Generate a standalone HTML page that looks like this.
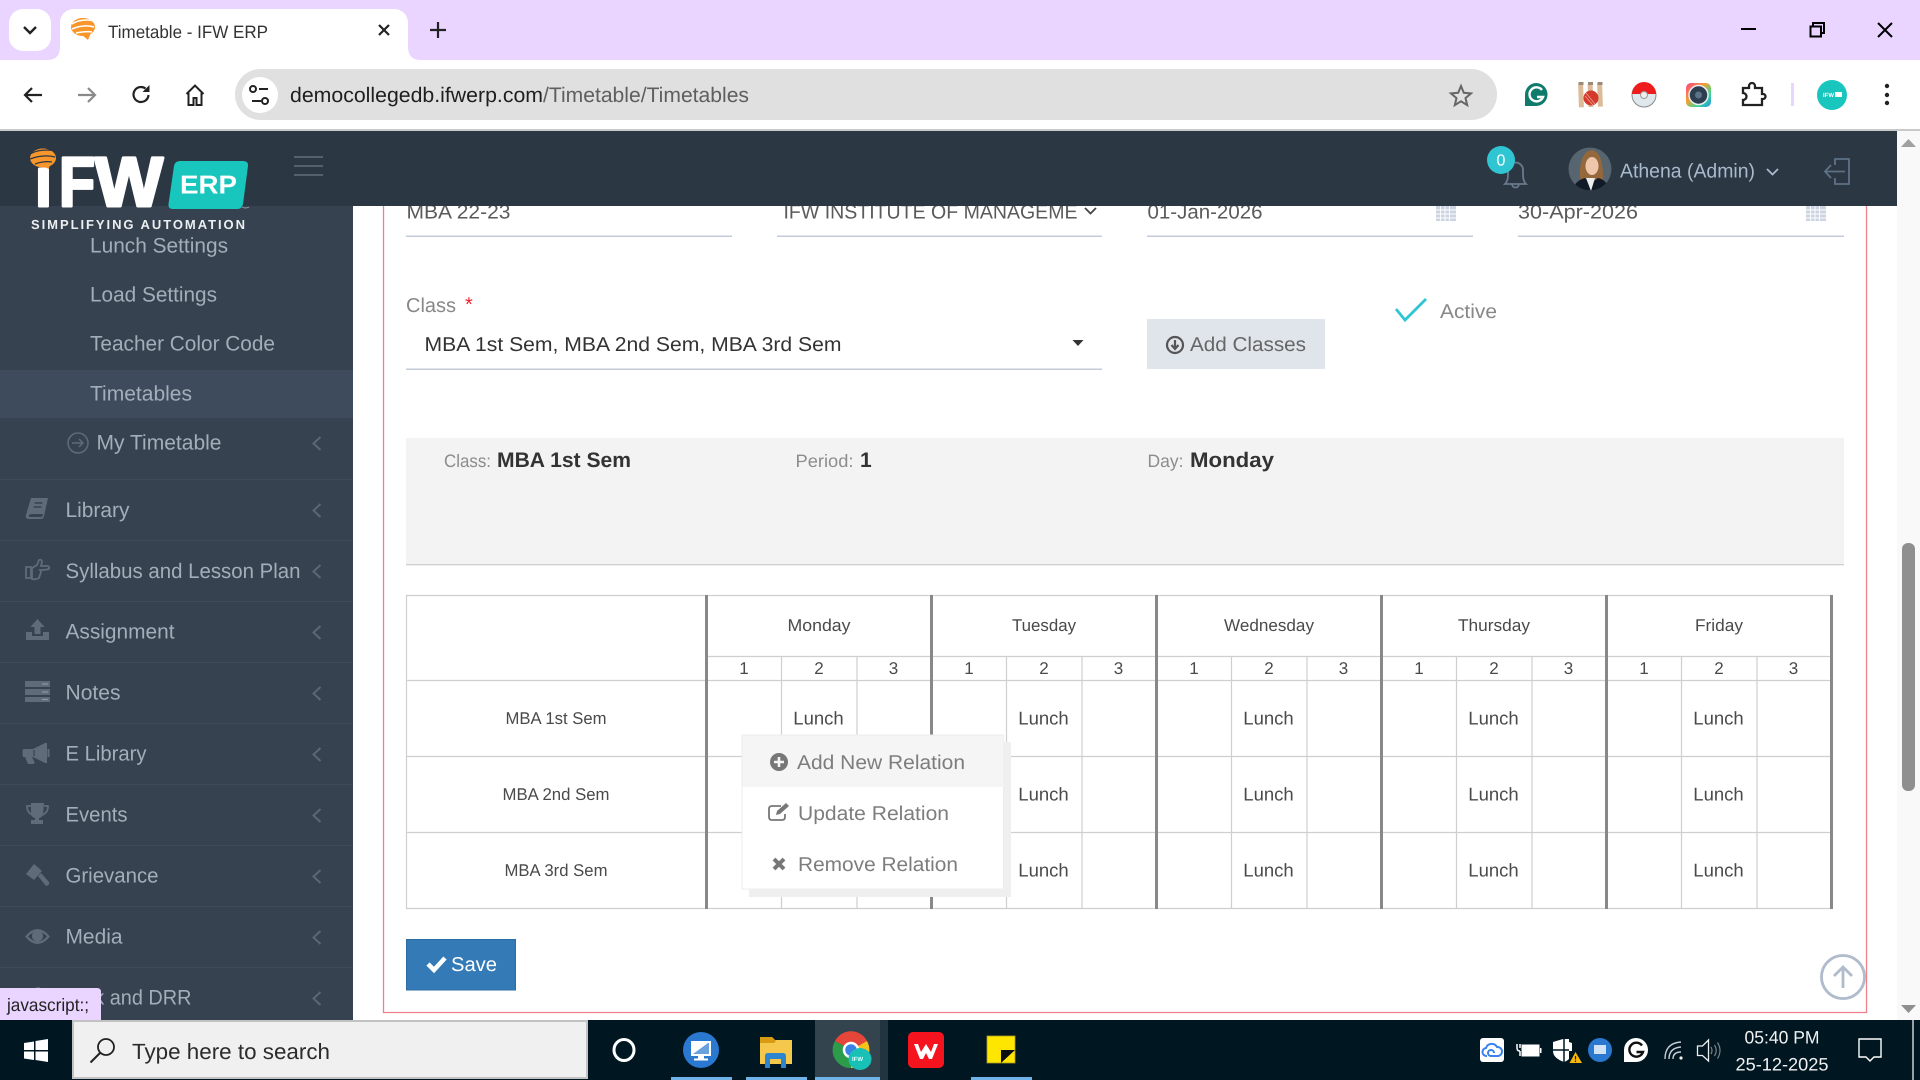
<!DOCTYPE html>
<html><head><meta charset="utf-8"><title>Timetable - IFW ERP</title>
<style>
html,body{margin:0;padding:0;width:1920px;height:1080px;overflow:hidden;background:#fff}
svg{display:block;position:absolute;left:0;top:0}
text{font-family:"Liberation Sans",Arial,sans-serif;text-rendering:geometricPrecision}
.m{fill:#a4aeba;font-size:21px}
.g{fill:#5f6b79}
.ch{fill:none;stroke:#5b6776;stroke-width:2}
.v{fill:#5a5a5a;font-size:20px}
.l{fill:#4a4a4a;font-size:17px;text-anchor:middle}
.p{fill:#4a4a4a;font-size:17px;text-anchor:middle}
.u{fill:#4a4a4a;font-size:18.5px;text-anchor:middle}
.d{fill:#7d7d7d;font-size:20px}
.lb{fill:#8c8c8c;font-size:18px}
.b{fill:#333;font-size:21px;font-weight:bold}
.logo{font-size:70px;font-weight:bold;fill:#fff;stroke:#fff;stroke-width:3;stroke-linejoin:round}
</style></head><body>
<svg width="1920" height="1080" viewBox="0 0 1920 1080" xmlns="http://www.w3.org/2000/svg">
<!-- browser chrome -->
<rect width="1920" height="60" fill="#e9d5ff"/>
<rect x="9" y="9" width="42" height="42" rx="14" fill="#fff"/>
<path d="M24 27l6 6 6-6" fill="none" stroke="#222" stroke-width="2.4"/>
<path d="M46 60c10 0 14-4 14-14V23c0-8 6-14 14-14h320c8 0 14 6 14 14v23c0 10 4 14 14 14z" fill="#fff"/>
<ellipse cx="83" cy="27" rx="12" ry="9" fill="#f8962c"/>
<path d="M72 24c6-4 15-5 22-3M72 29c7-3 15-4 22-2M76 33c5-1 11-2 16-1" stroke="#fff" stroke-width="1.500" fill="none"/>
<path d="M82 35l6 5 3-7z" fill="#f8962c"/>
<text x="108" y="38" font-size="18" fill="#333" textLength="160" lengthAdjust="spacingAndGlyphs">Timetable - IFW ERP</text>
<path d="M379 25l10 10M389 25l-10 10" stroke="#222" stroke-width="2.2"/>
<path d="M430 30h16M438 22v16" stroke="#222" stroke-width="2.2"/>
<path d="M1741 29h15" stroke="#000" stroke-width="2"/>
<path d="M1813 26v-3h11v10h-3M1810.500 26.500h10.500v10h-10.500z" fill="none" stroke="#000" stroke-width="2"/>
<path d="M1878 23l14 14M1892 23l-14 14" stroke="#000" stroke-width="2"/>
<path d="M0 129V74q0-14 14-14H1906q14 0 14 14V129z" fill="#fff"/>
<rect y="129" width="1920" height="2" fill="#c9c9c9"/>
<path d="M42 95H25M32 88l-7 7 7 7" fill="none" stroke="#222" stroke-width="2.2"/>
<path d="M95 95H78M88 88l7 7-7 7" fill="none" stroke="#8a8a8a" stroke-width="2.2"/>
<path d="M148.500 95a7.500 7.500 0 1 1-3-6.500" fill="none" stroke="#222" stroke-width="2.2"/>
<path d="M149.500 85v7h-7z" fill="#222"/>
<path d="M186.500 94l8.500-8.500L203.500 94M188.500 93v12h5v-7h3v7h5V93" fill="none" stroke="#222" stroke-width="2"/>
<rect x="235" y="69" width="1262" height="51" rx="25.500" fill="#e0e0e0"/>
<circle cx="260" cy="95" r="18" fill="#fff"/>
<circle cx="253" cy="89" r="3" fill="none" stroke="#222" stroke-width="2"/>
<path d="M259 89h9M252 101h9" stroke="#222" stroke-width="2"/>
<circle cx="265" cy="101" r="3" fill="none" stroke="#222" stroke-width="2"/>
<text x="290" y="102" font-size="21" fill="#1f1f1f" textLength="253" lengthAdjust="spacingAndGlyphs">democollegedb.ifwerp.com</text>
<text x="543" y="102" font-size="21" fill="#5f5f5f" textLength="206" lengthAdjust="spacingAndGlyphs">/Timetable/Timetables</text>
<path d="M1461 86l2.800 6.800 7.200.6-5.500 4.700 1.700 7-6.200-3.800-6.200 3.800 1.700-7-5.500-4.700 7.200-.6z" fill="none" stroke="#666" stroke-width="2"/>
<!-- extensions -->
<path d="M1536 83a11.500 11.500 0 1 1 0 23h-11v-11.500a11.500 11.500 0 0 1 11-11.500z" fill="#0f7b6c"/>
<path d="M1542 90a7 7 0 1 0 1 7h-6" fill="none" stroke="#fff" stroke-width="2.400"/>
<g transform="rotate(-2 1590 95)"><rect x="1578.500" y="84" width="5" height="23" fill="#dcbc98"/><rect x="1588" y="84" width="5" height="23" fill="#dcbc98"/><rect x="1597.500" y="84" width="5" height="23" fill="#dcbc98"/></g>
<path d="M1578.500 82h5v3h-5zM1588 82h5v3h-5zM1597.500 82h5v3h-5z" fill="#9c8a78"/>
<circle cx="1591" cy="98" r="7.500" fill="#d33a2c"/><path d="M1586 93l9 11M1585 96l8 9" stroke="#f3a8a0" stroke-width=".7"/>
<circle cx="1644" cy="95" r="12" fill="#dfe8ec" stroke="#8a8a8a"/>
<path d="M1632 94a12 12 0 0 1 24 0z" fill="#ee1c1c"/>
<circle cx="1644" cy="95" r="3.500" fill="#eee" stroke="#999"/>
<defs><linearGradient id="ig" x1="0" y1="0" x2="1" y2="1"><stop offset="0" stop-color="#ff3d8b"/><stop offset=".4" stop-color="#f2a030"/><stop offset=".7" stop-color="#3dd890"/><stop offset="1" stop-color="#2090f0"/></linearGradient></defs>
<rect x="1686" y="83" width="25" height="24" rx="5" fill="url(#ig)"/>
<circle cx="1698.500" cy="95" r="9.500" fill="#2d3e50" stroke="#e8edf2" stroke-width="1.500"/>
<circle cx="1698.500" cy="95" r="3.500" fill="#5c7488"/>
<path d="M1743 88h6v-2a3 3 0 0 1 6 0v2h7v6h1a2.500 2.500 0 0 1 0 5h-1v6h-19v-5a3 3 0 0 0 0-7z" fill="none" stroke="#222" stroke-width="2.300"/>
<rect x="1791" y="83" width="3" height="23" fill="#e9d5ff"/>
<circle cx="1832" cy="95" r="15" fill="#19c6bd"/>
<text x="1823" y="97" font-size="6" font-weight="bold" fill="#fff">IFW</text><rect x="1835" y="92" width="7" height="5" fill="#fff"/>
<circle cx="1887" cy="86" r="2.200" fill="#222"/><circle cx="1887" cy="95" r="2.200" fill="#222"/><circle cx="1887" cy="103" r="2.200" fill="#222"/>

<!-- main -->
<rect x="1897" y="131" width="23" height="889" fill="#f9f9f9"/>
<path d="M1901 147l7.500-8 7.500 8z" fill="#a0a0a0"/>
<path d="M1901 1005l7.500 8 7.500-8z" fill="#8f8f8f"/>
<rect x="1902" y="543" width="13" height="248" rx="6" fill="#8f8f8f"/>
<path d="M383.500 206V1012.500H1866.500V206" fill="none" stroke="#ef7f88" stroke-width="1.300"/>

<text x="406.500" y="218.500" class="v" textLength="104" lengthAdjust="spacingAndGlyphs">MBA 22-23</text>
<text x="783.500" y="218.500" class="v" textLength="294" lengthAdjust="spacingAndGlyphs">IFW INSTITUTE OF MANAGEME</text>
<path d="M1085 208l5.500 5.500 5.500-5.500" fill="none" stroke="#444" stroke-width="1.800"/>
<text x="1147.500" y="218.500" class="v" textLength="115" lengthAdjust="spacingAndGlyphs">01-Jan-2026</text>
<text x="1518" y="218.500" class="v" textLength="120" lengthAdjust="spacingAndGlyphs">30-Apr-2026</text>
<g id="cal"><rect x="1436" y="206" width="20" height="15" fill="#ccd4e2"/>
<path d="M1440.500 206v15M1445 206v15M1449.500 206v15M1436 210h20M1436 214h20M1436 218h20" stroke="#fff" stroke-width=".9"/></g>
<use href="#cal" x="370"/>
<g fill="#c3cbd9"><rect x="406" y="235.500" width="326" height="1.500"/><rect x="777" y="235.500" width="325" height="1.500"/><rect x="1147" y="235.500" width="326" height="1.500"/><rect x="1518" y="235.500" width="326" height="1.500"/><rect x="406" y="368.500" width="696" height="1.500"/></g>

<text x="406" y="312" font-size="20" fill="#888" textLength="50" lengthAdjust="spacingAndGlyphs">Class</text>
<text x="465" y="311" font-size="20" fill="#f0202c">*</text>
<text x="424.500" y="351" font-size="20" fill="#333" textLength="417" lengthAdjust="spacingAndGlyphs">MBA 1st Sem, MBA 2nd Sem, MBA 3rd Sem</text>
<path d="M1072.500 340h11l-5.500 6z" fill="#333"/>
<rect x="1147" y="319" width="178" height="50" fill="#e0e5ec"/>
<circle cx="1175" cy="345" r="8" fill="none" stroke="#555" stroke-width="2.200"/>
<path d="M1175 340v8M1171.500 345l3.500 4 3.500-4" fill="none" stroke="#555" stroke-width="2.200"/>
<text x="1190" y="351" font-size="20" fill="#666" textLength="116" lengthAdjust="spacingAndGlyphs">Add Classes</text>
<path d="M1396 309l9 11 21-21" fill="none" stroke="#2fc5d3" stroke-width="2.800"/>
<text x="1440" y="318" font-size="20" fill="#888" textLength="57" lengthAdjust="spacingAndGlyphs">Active</text>

<rect x="406" y="438" width="1438" height="126" fill="#f3f3f3"/>
<rect x="406" y="564" width="1438" height="1.300" fill="#cfcfcf"/>
<text x="444" y="467" class="lb" textLength="47" lengthAdjust="spacingAndGlyphs">Class:</text>
<text x="497" y="467" class="b" textLength="134" lengthAdjust="spacingAndGlyphs">MBA 1st Sem</text>
<text x="795.500" y="467" class="lb" textLength="58" lengthAdjust="spacingAndGlyphs">Period:</text>
<text x="860" y="467" class="b">1</text>
<text x="1147.500" y="467" class="lb" textLength="36" lengthAdjust="spacingAndGlyphs">Day:</text>
<text x="1190" y="467" class="b" textLength="84" lengthAdjust="spacingAndGlyphs">Monday</text>

<!-- table -->
<g stroke="#cfcfcf" stroke-width="1.200" fill="none">
<path d="M406.500 595.500H1832M406.500 680.500H1832M706 656.500H1832M406.500 756.500H1832M406.500 832.500H1832M406.500 908.500H1832M406.500 595V909"/>
<path d="M781.500 656V908M857 656V908M1006.500 656V908M1082 656V908M1231.500 656V908M1307 656V908M1456.500 656V908M1532 656V908M1681.500 656V908M1757 656V908"/>
</g>
<g fill="#888"><rect x="705" y="595" width="3" height="314"/><rect x="930" y="595" width="3" height="314"/><rect x="1155" y="595" width="3" height="314"/><rect x="1380" y="595" width="3" height="314"/><rect x="1605" y="595" width="3" height="314"/><rect x="1830" y="595" width="3" height="314"/></g>
<text x="819" y="631" class="p" textLength="63" lengthAdjust="spacingAndGlyphs">Monday</text>
<text x="1044" y="631" class="p" textLength="64" lengthAdjust="spacingAndGlyphs">Tuesday</text>
<text x="1269" y="631" class="p" textLength="90" lengthAdjust="spacingAndGlyphs">Wednesday</text>
<text x="1494" y="631" class="p" textLength="72" lengthAdjust="spacingAndGlyphs">Thursday</text>
<text x="1719" y="631" class="p" textLength="48" lengthAdjust="spacingAndGlyphs">Friday</text>
<text x="744" y="674" class="p">1</text><text x="819" y="674" class="p">2</text><text x="893.500" y="674" class="p">3</text>
<text x="969" y="674" class="p">1</text><text x="1044" y="674" class="p">2</text><text x="1118.500" y="674" class="p">3</text>
<text x="1194" y="674" class="p">1</text><text x="1269" y="674" class="p">2</text><text x="1343.500" y="674" class="p">3</text>
<text x="1419" y="674" class="p">1</text><text x="1494" y="674" class="p">2</text><text x="1568.500" y="674" class="p">3</text>
<text x="1644" y="674" class="p">1</text><text x="1719" y="674" class="p">2</text><text x="1793.500" y="674" class="p">3</text>
<text x="556" y="724" class="l" textLength="101" lengthAdjust="spacingAndGlyphs">MBA 1st Sem</text>
<text x="556" y="800" class="l" textLength="107" lengthAdjust="spacingAndGlyphs">MBA 2nd Sem</text>
<text x="556" y="876" class="l" textLength="103" lengthAdjust="spacingAndGlyphs">MBA 3rd Sem</text>
<text x="818.500" y="724.500" class="u">Lunch</text>
<text x="1043.500" y="724.500" class="u">Lunch</text><text x="1268.500" y="724.500" class="u">Lunch</text><text x="1493.500" y="724.500" class="u">Lunch</text><text x="1718.500" y="724.500" class="u">Lunch</text>
<text x="1043.500" y="800.500" class="u">Lunch</text><text x="1268.500" y="800.500" class="u">Lunch</text><text x="1493.500" y="800.500" class="u">Lunch</text><text x="1718.500" y="800.500" class="u">Lunch</text>
<text x="1043.500" y="876.500" class="u">Lunch</text><text x="1268.500" y="876.500" class="u">Lunch</text><text x="1493.500" y="876.500" class="u">Lunch</text><text x="1718.500" y="876.500" class="u">Lunch</text>

<!-- context menu -->
<rect x="749" y="742" width="262" height="155" fill="#efefef"/>
<rect x="742" y="735" width="261.500" height="154" fill="#fff" stroke="#ececec"/>
<rect x="742.500" y="735.500" width="261" height="51.500" fill="#f5f5f5"/>
<circle cx="779" cy="762" r="9" fill="#777"/><path d="M779 757v10M774 762h10" stroke="#f5f5f5" stroke-width="2.600"/>
<text x="797" y="769" class="d" textLength="168" lengthAdjust="spacingAndGlyphs">Add New Relation</text>
<path d="M781 806h-9q-3 0-3 3v8q0 3 3 3h10q3 0 3-3v-3" fill="none" stroke="#777" stroke-width="1.800"/>
<path d="M776 815l1-4 9-8 3 3-9 8z" fill="#777"/>
<text x="798" y="820" class="d" textLength="151" lengthAdjust="spacingAndGlyphs">Update Relation</text>
<path d="M774 859l10 10M784 859l-10 10" stroke="#777" stroke-width="4"/>
<text x="798" y="871" class="d" textLength="160" lengthAdjust="spacingAndGlyphs">Remove Relation</text>

<!-- save -->
<rect x="406.500" y="939.500" width="109" height="50.500" fill="#337ab7" stroke="#2e6da4"/>
<path d="M428 964l6 6 11-12" fill="none" stroke="#fff" stroke-width="4.500"/>
<text x="451" y="971" font-size="20" fill="#fff" textLength="46" lengthAdjust="spacingAndGlyphs">Save</text>
<circle cx="1843" cy="977" r="21.500" fill="#fff" fill-opacity=".6" stroke="#b0bccc" stroke-width="2.800"/>
<path d="M1843 988v-21M1834 976l9-9 9 9" fill="none" stroke="#b0bccc" stroke-width="2.800"/>

<!-- sidebar -->
<rect y="206" width="353" height="814" fill="#36424f"/>
<text x="90" y="252.500" class="m" textLength="138" lengthAdjust="spacingAndGlyphs">Lunch Settings</text>
<text x="90" y="301.500" class="m" textLength="127" lengthAdjust="spacingAndGlyphs">Load Settings</text>
<text x="90" y="350.500" class="m" textLength="185" lengthAdjust="spacingAndGlyphs">Teacher Color Code</text>
<rect y="370" width="353" height="48" fill="#3e4b5c"/>
<text x="90" y="400.500" class="m" textLength="102" lengthAdjust="spacingAndGlyphs">Timetables</text>
<circle cx="78" cy="443" r="10" fill="none" stroke="#5f6b79" stroke-width="1.500"/>
<path d="M72 443h11M79 439l4 4-4 4" fill="none" stroke="#5f6b79" stroke-width="1.500"/>
<text x="96.500" y="449.500" class="m" textLength="125" lengthAdjust="spacingAndGlyphs">My Timetable</text>
<g stroke="#3f4b5a" stroke-width="1"><path d="M0 479.500H353M0 540.500H353M0 601.500H353M0 662.500H353M0 723.500H353M0 784.500H353M0 845.500H353M0 906.500H353M0 967.500H353"/></g>
<text x="65.500" y="517" class="m" textLength="64" lengthAdjust="spacingAndGlyphs">Library</text>
<text x="65.500" y="578" class="m" textLength="235" lengthAdjust="spacingAndGlyphs">Syllabus and Lesson Plan</text>
<text x="65.500" y="638.500" class="m" textLength="109" lengthAdjust="spacingAndGlyphs">Assignment</text>
<text x="65.500" y="699.500" class="m" textLength="55" lengthAdjust="spacingAndGlyphs">Notes</text>
<text x="65.500" y="760.500" class="m" textLength="81" lengthAdjust="spacingAndGlyphs">E Library</text>
<text x="65.500" y="821.500" class="m" textLength="62" lengthAdjust="spacingAndGlyphs">Events</text>
<text x="65.500" y="882.500" class="m" textLength="93" lengthAdjust="spacingAndGlyphs">Grievance</text>
<text x="65.500" y="943.500" class="m" textLength="57" lengthAdjust="spacingAndGlyphs">Media</text>
<text x="65.500" y="1004.500" class="m" textLength="126" lengthAdjust="spacingAndGlyphs">Risk and DRR</text>
<path class="ch" d="M320.500 437l-7 6.500 7 6.500M320.500 504l-7 6.500 7 6.500M320.500 565l-7 6.500 7 6.500M320.500 626l-7 6.500 7 6.500M320.500 687l-7 6.500 7 6.500M320.500 748l-7 6.500 7 6.500M320.500 809l-7 6.500 7 6.500M320.500 870l-7 6.500 7 6.500M320.500 931l-7 6.500 7 6.500M320.500 992l-7 6.500 7 6.500"/>
<!-- sidebar icons -->
<path class="g" d="M31 498h17l-4 18q-.5 3-3 3H29q-4 0-3-4zM29 515q-1 2 1 2h12l1-3H31z"/>
<path d="M34.500 503h8M33.500 507h8" stroke="#36424f" stroke-width="1.400"/>
<path d="M26 567h5v11h-5zM32 568l5-3 2-5q3-1 3 2l-1 4h7q2 1 1 3-3 1-9 1l1 2-2 6q-4 2-7 1z" fill="none" stroke="#5f6b79" stroke-width="1.800"/>
<path class="g" d="M37.500 619l7 8h-4v7h-6v-7h-4zM26 632h6v4h11v-4h6v8H26z"/>
<path class="g" d="M25 681h25v6H25zM25 689h25v6H25zM25 697h25v5H25z"/>
<path d="M42 684h6M42 692h6M42 699.500h6" stroke="#8d97a3" stroke-width="1.200"/>
<path class="g" d="M26 749h7l12-6h2v20h-2l-12-6-1 0 3 6-2 1h-5l-3-7h-2q-1-4 0-8z"/><rect x="47.500" y="749" width="2" height="8" fill="#5f6b79"/><path d="M34 750v6" stroke="#36424f" stroke-width="1.200"/>
<path class="g" d="M31 803h13l-1 12q-2 3-4 3v2h4v4H31v-4h4v-2q-2 0-4-3z"/><path d="M31 806h-4q0 7 6 9M44 806h4q0 7-6 9" fill="none" stroke="#5f6b79" stroke-width="1.800"/>
<path class="g" d="M26 874l8-10 8 7-8 9zM38 876l3-3 8 9q1 3-3 4z"/>
<path class="g" d="M25 936.500q12.500-15 25 0-12.500 15-25 0z"/><path d="M28 936.500q9.500-10 19 0-9.500 10-19 0z" fill="#36424f"/><circle cx="37.500" cy="936" r="5.500" fill="#5f6b79"/>
<circle cx="38" cy="992" r="5" class="g"/>

<!-- header -->
<rect y="131" width="1897" height="75" fill="#2b3743"/>
<text x="35" y="206" class="logo" textLength="17" lengthAdjust="spacingAndGlyphs">i</text>
<text x="59" y="206" class="logo" textLength="36" lengthAdjust="spacingAndGlyphs">F</text>
<text x="95" y="206" class="logo" textLength="68" lengthAdjust="spacingAndGlyphs">W</text>
<ellipse cx="43" cy="158" rx="13" ry="9.500" fill="#f8962c"/>
<path d="M30 154c7-4 17-5 25-3M30 159c8-3 17-4 25-2M35 164c5-2 12-3 17-2" stroke="#2b3743" stroke-width="1.300" fill="none"/>
<path d="M42 166l7 3 1-6z" fill="#f8962c"/>
<path d="M180 161H243q5.500 0 5 5l-5 38q-1 5-6 5H173q-5 0-4.500-5L174 166q1-5 6-5z" fill="#19c6bd"/>
<text x="180" y="193.500" font-size="26" font-weight="bold" fill="#fff" textLength="57" lengthAdjust="spacingAndGlyphs">ERP</text>
<path d="M242 207q3.500 2 7 0" stroke="#9aa4ae" fill="none" stroke-width="1"/>
<text x="31" y="229" font-size="13" font-weight="bold" fill="#eceef0" textLength="214" lengthAdjust="spacing">SIMPLIFYING AUTOMATION</text>
<path d="M294 157h29M294 166h29M294 175h29" stroke="#6e7a86" stroke-width="1.200"/>
<path d="M1507 184h19q-3-3-3-9v-5a7.500 7.500 0 0 0-15 0v5q0 6-3 9zM1512 184a3.500 3.500 0 0 0 7 0" fill="none" stroke="#6a7a8c" stroke-width="1.800"/>
<circle cx="1501" cy="160" r="14" fill="#2fc5d3"/>
<text x="1501" y="165.500" font-size="16" fill="#fff" text-anchor="middle">0</text>
<clipPath id="av"><circle cx="1590" cy="169" r="21.500"/></clipPath>
<g clip-path="url(#av)"><rect x="1568" y="147" width="44" height="44" fill="#56656f"/>
<path d="M1580 182q-2-30 12-32 12 2 11 32z" fill="#94683c"/>
<ellipse cx="1592" cy="166" rx="6.500" ry="9" fill="#edc6ab"/>
<path d="M1572 192q2-11 13-14l6 5 7-5q10 2 11 14z" fill="#121a28"/>
<path d="M1586 178l5 13 4-13z" fill="#eee"/></g>
<text x="1620" y="177.500" font-size="20" fill="#a9bacd" textLength="135" lengthAdjust="spacingAndGlyphs">Athena (Admin)</text>
<path d="M1767 169l5.500 5.500 5.500-5.500" fill="none" stroke="#a9bacd" stroke-width="1.800"/>
<path d="M1835 165v-6h14v25h-14v-6M1845 171.500h-20M1831 165l-6 6.500 6 6.500" fill="none" stroke="#5f7186" stroke-width="1.800"/>

<!-- tooltip -->
<path d="M0 988H97q4 0 4 4V1020H0z" fill="#e9d5ff"/>
<text x="7" y="1011" font-size="18" fill="#222" textLength="82" lengthAdjust="spacingAndGlyphs">javascript:;</text>

<!-- taskbar -->
<rect y="1020" width="1920" height="60" fill="#001722"/>
<path d="M24 1043l10-1.500V1050H24zM35.500 1041l12.500-2V1050H35.500zM24 1051.500h10v8.500l-10-1.500zM35.500 1051.500H48V1062l-12.500-2z" fill="#fff"/>
<rect x="73" y="1021" width="514" height="57" fill="#f0f0f0" stroke="#c2c2c2" stroke-width="2"/>
<circle cx="106" cy="1047" r="8" fill="none" stroke="#222" stroke-width="1.800"/><path d="M100 1053l-9.500 9.500" stroke="#222" stroke-width="2"/>
<text x="132" y="1059" font-size="22" fill="#2b2b2b" textLength="198" lengthAdjust="spacingAndGlyphs">Type here to search</text>
<ellipse cx="624" cy="1050" rx="10" ry="10.500" fill="none" stroke="#fff" stroke-width="3"/>
<rect x="671" y="1077" width="61" height="3" fill="#6fb3e8"/><rect x="746" y="1077" width="61" height="3" fill="#6fb3e8"/><rect x="971" y="1077" width="61" height="3" fill="#6fb3e8"/>
<circle cx="701" cy="1050" r="18" fill="#2a78cf"/>
<rect x="691" y="1041" width="20" height="15" fill="#fff"/><path d="M693 1054l15-11h1v11z" fill="#2a78cf" opacity=".7"/><rect x="698" y="1056" width="6" height="3" fill="#fff"/><rect x="694" y="1058.500" width="14" height="2" fill="#fff"/>
<path d="M760 1037h12l3 3h17v24h-32z" fill="#f5c84b"/><path d="M760 1037h12l4 4-2 2h-14z" fill="#d99a14"/><path d="M765 1068v-12q0-3 3-3h15q3 0 3 3v12h-5v-9h-11v9z" fill="#2e85cf"/>
<rect x="815" y="1020" width="73" height="60" fill="#33444f"/><rect x="815" y="1077" width="65" height="3" fill="#6fb3e8"/><rect x="880" y="1020" width="8" height="60" fill="#22343f"/>
<path d="M851 1050L835 1041A18 18 0 0 1 867 1041z" fill="#e6463a"/>
<path d="M851 1050L867 1041A18 18 0 0 1 851 1068z" fill="#f6c21c"/>
<path d="M851 1050L851 1068A18 18 0 0 1 835 1041z" fill="#2c9b4a"/>
<circle cx="851" cy="1050" r="7" fill="#3b82e8" stroke="#fff" stroke-width="2.500"/>
<ellipse cx="860" cy="1059" rx="11.500" ry="11" fill="#19c0b5"/>
<text x="852" y="1061" font-size="6" font-weight="bold" fill="#dff">IFW</text>
<rect x="908" y="1032" width="36" height="36" rx="5" fill="#f5141e"/>
<path d="M914 1044h4l3 8 5-8 5 8 3-8h4l-6 15h-3l-3-6-3 6h-3z" fill="#fff"/>
<rect x="987" y="1036" width="28" height="27" fill="#ffe600" stroke="#aa9a20" stroke-width=".8"/><path d="M1001 1063l14-13h-14z" fill="#0a0f12"/>
<!-- tray -->
<rect x="1480" y="1038" width="24" height="24" rx="3" fill="#fff"/>
<path d="M1487 1056a4 4 0 0 1-1-8 6 6 0 0 1 11-1 4.500 4.500 0 0 1 1 9h-7a3 3 0 1 1 3-3" fill="none" stroke="#3b82f0" stroke-width="2"/>
<rect x="1522" y="1045" width="17" height="11" fill="#fff" stroke="#fff"/><rect x="1540" y="1048" width="1.500" height="5" fill="#fff"/>
<path d="M1517 1044v4q0 3 3 3M1520 1044v4" stroke="#fff" stroke-width="1.500" fill="none"/><path d="M1520 1051v5" stroke="#fff" stroke-width="1.500"/>
<path d="M1565 1039l-1 0-10 3v9q0 7 11 11 3-1 5-3v-20z" fill="#fff" transform="translate(-1 0)"/><path d="M1564 1039v23M1553 1050h18" stroke="#001722" stroke-width="1.500"/><path d="M1569 1042l3 1v8h-3z" fill="#fff"/>
<path d="M1569.500 1063l6-11 6.500 11z" fill="#f8b60c"/><path d="M1575.500 1056v3.500M1575.500 1060.500v1.500" stroke="#222" stroke-width="1.200"/>
<circle cx="1600" cy="1050" r="12" fill="#2a78cf"/><rect x="1594" y="1045" width="12" height="9" fill="#cfe2f6"/>
<path d="M1636 1038a12 12 0 0 1 0 24h-12v-12a12 12 0 0 1 12-12z" fill="#fff"/><path d="M1642 1045.500a7 7 0 1 0 1 6.500h-6.500" fill="none" stroke="#111" stroke-width="2.400"/>
<path d="M1665 1059q0-16 16-17M1669 1059q0-11 12-12M1673 1059q0-7 8-7" fill="none" stroke="#c8cdd1" stroke-width="1.400"/><circle cx="1681" cy="1058" r="1.600" fill="#eee"/>
<path d="M1697.500 1046h5l6-6v21l-6-5.500h-5z" fill="none" stroke="#eee" stroke-width="1.300"/>
<path d="M1711 1047q2 3.500 0 7M1714.500 1045q3.500 5.500 0 11M1717.500 1042.500q5 8 0 16" fill="none" stroke="#7a8288" stroke-width="1.200"/>
<text x="1782" y="1043.500" font-size="18" fill="#f2f2f2" text-anchor="middle" textLength="75" lengthAdjust="spacingAndGlyphs">05:40 PM</text>
<text x="1782" y="1070.500" font-size="18" fill="#f2f2f2" text-anchor="middle" textLength="93" lengthAdjust="spacingAndGlyphs">25-12-2025</text>
<path d="M1859 1039h22v18h-7l-4 4-4-4h-7z" fill="none" stroke="#fff" stroke-width="1.400"/>
<rect x="1912" y="1020" width="2" height="60" fill="#9aa0a4"/>
</svg>
</body></html>
